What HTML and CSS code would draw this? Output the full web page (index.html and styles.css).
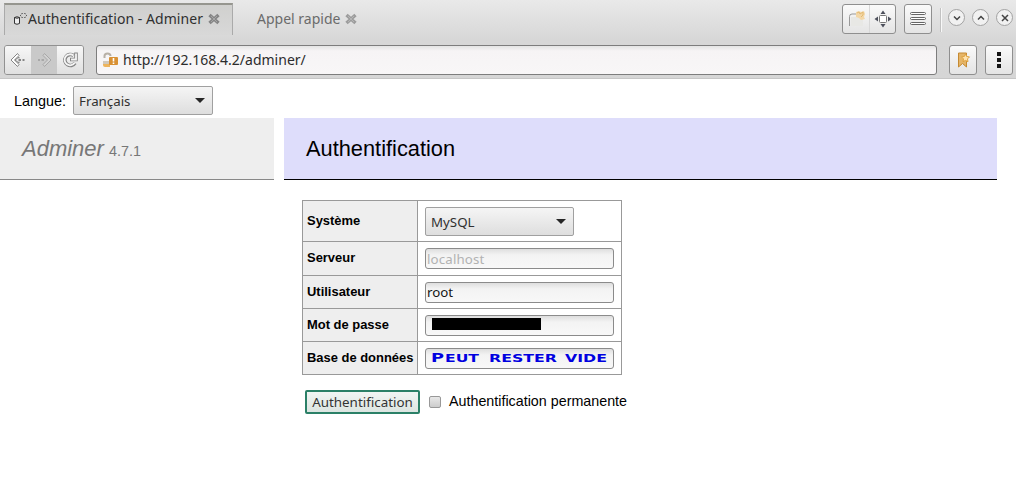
FILE: index.html
```html
<!DOCTYPE html>
<html lang="fr">
<head>
<meta charset="utf-8">
<title>Authentification - Adminer</title>
<link rel="stylesheet" href="styles.css">
</head>
<body>
<div class="chrome">
  <div class="tabbar">
    <div class="tab active">
      <svg class="favicon" width="14" height="16" viewBox="0 0 14 16" fill="none" stroke="#333"><path d="M1.500 6.500v6q2.500 1.500 5 0v-6q-2.500-1.500-5 0q2.500 1.500 5 0" fill="#eee"/><path d="M9.500 2l-2 2.500 2 2.500M11.500 2l2 2.500-2 2.500" stroke-dasharray="1.500 1"/></svg>
      <span class="tabtext t1">Authentification - Adminer</span>
      <svg class="close" width="12" height="12" viewBox="0 0 12 12"><path d="M1.500 2l9 8M10.500 2l-9 8" stroke="#858585" stroke-width="3.400"/><path d="M3 3l6 6M9 3l-6 6" stroke="#a5a5a5" stroke-width="1"/></svg>
    </div>
    <div class="tab">
      <span class="tabtext t2">Appel rapide</span>
      <svg class="close" width="12" height="12" viewBox="0 0 12 12"><path d="M1.500 2l9 8M10.500 2l-9 8" stroke="#9d9d9d" stroke-width="3.400"/><path d="M3 3l6 6M9 3l-6 6" stroke="#b5b5b5" stroke-width="1"/></svg>
    </div>
    <div class="tools">
      <div class="btngroup pair">
        <div class="seg"><svg width="20" height="20" viewBox="0 0 20 20" fill="none"><path d="M3.500 17V7.500q0-2.500 2.500-2.500h4" stroke="#999"/><path d="M5 8h12v9H5z" fill="#e8e8e5"/><path d="M10 3l3-1 2 1 3-1 1 3-1 3 1 2-4 1-2-2-3-1z" fill="#f3d7a6"/><path d="M11 4l2-1 1 2 3-2v3l-2 2" stroke="#e2b972"/></svg></div>
        <div class="seg"><svg width="18" height="18" viewBox="0 0 18 18"><rect x="5.500" y="5.500" width="7" height="7" rx="1" fill="#fff" stroke="#777"/><path d="M9 0.500l2.500 3.500h-5zM9 17.500l2.500-3.500h-5zM0.500 9l3.500-2.500v5zM17.500 9l-3.500-2.500v5z" fill="#4d505c"/></svg></div>
      </div>
      <div class="btngroup menu"><svg width="16" height="16" viewBox="0 0 16 16" fill="#fff" stroke="#666"><rect x="0.500" y="1.500" width="15" height="2" rx="1"/><rect x="0.500" y="6.500" width="15" height="2" rx="1"/><rect x="0.500" y="11.500" width="15" height="2" rx="1"/></svg></div>
      <div class="divider"></div>
      <div class="round"><svg width="8" height="8" viewBox="0 0 8 8"><path d="M1 2.500l3 3 3-3"/></svg></div>
      <div class="round"><svg width="8" height="8" viewBox="0 0 8 8"><path d="M1 5.500l3-3 3 3"/></svg></div>
      <div class="round"><svg width="8" height="8" viewBox="0 0 8 8"><path d="M1 1l6 6M7 1L1 7"/></svg></div>
    </div>
  </div>
  <div class="toolbar">
    <div class="nav">
      <div class="navbtn"><svg width="18" height="18" viewBox="0 0 18 18" fill="none" stroke="#858585"><path d="M8.500 2.500L2 9l6.500 6.500 1.500-2L5.500 9 10 4.500z" fill="#fff"/><path d="M6 9l4-3v1.500M6 9l4 3v-1.500"/><path d="M9.500 9h2.500M13.500 9h2" stroke-width="2"/></svg></div>
      <div class="navbtn off"><svg width="18" height="18" viewBox="0 0 18 18" fill="none" stroke="#a8a8a8"><path d="M9.500 2.500L16 9l-6.500 6.500-1.500-2L12.500 9 8 4.500z" fill="#d2d2d2"/><path d="M3 9h2M6.500 9H9" stroke-width="2"/></svg></div>
      <div class="navbtn"><svg width="18" height="18" viewBox="0 0 18 18" fill="none"><path d="M12.500 4.500A5.500 5.500 0 1 0 14 12M15 1.500v7H9" stroke="#858585" stroke-width="3.600"/><path d="M12.500 4.500A5.500 5.500 0 1 0 13.700 11.700M15 2.500v6h-5" stroke="#f5f5f5" stroke-width="1.800"/></svg></div>
    </div>
    <div class="address">
      <svg width="17" height="16" viewBox="0 0 17 16" fill="none"><path d="M2.500 6V4q0-2.500 3-2.500t3 2.500" stroke="#b7b0a6" stroke-width="2"/><path d="M1 9h7v6H3q-2 0-2-2z" fill="#edb45d"/><path d="M1 9h6v3H1z" fill="#d0c8bb"/><rect x="7" y="5" width="9" height="8" rx="1" fill="#d99134"/><path d="M11.500 6v3.500M11.500 10.500V12" stroke="#fff" stroke-width="1.600"/></svg>
      <span class="url">http://192.168.4.2/adminer/</span>
    </div>
    <div class="btngroup bookmark"><svg width="16" height="18" viewBox="0 0 16 18" fill="none"><path d="M3.500 2h8v14l-4-3.500-4 3.500z" fill="#e5b568" stroke="#c58a32"/><path d="M10.500 3l1.200 2.500 2.800.4-2 2 .5 2.800-2.500-1.300-2.500 1.300.5-2.800-2-2 2.800-.4z" fill="#ffe4b1" stroke="#dfa23f"/></svg></div>
    <div class="btngroup dots"><svg width="6" height="18" viewBox="0 0 6 18" fill="#151515"><path d="M1 1h4v4H1zM1 7h4v4H1zM1 13h4v4H1z"/></svg></div>
  </div>
</div>
<div class="language"><span class="langlabel">Langue:</span><div class="select lang"><span>Français</span><i class="arrow"></i></div></div>
<div class="headings">
  <div class="brand"><span class="name">Adminer</span><span class="version">4.7.1</span></div>
  <h2 class="title">Authentification</h2>
</div>
<div class="content">
  <div class="login">
    <div class="label">Système</div><div class="cell"><div class="select system"><span>MySQL</span><i class="arrow"></i></div></div>
    <div class="label">Serveur</div><div class="cell"><div class="field hint">localhost</div></div>
    <div class="label">Utilisateur</div><div class="cell"><div class="field">root</div></div>
    <div class="label">Mot de passe</div><div class="cell"><div class="field"><div class="mask"></div></div></div>
    <div class="label">Base de données</div><div class="cell"><div class="field"><svg class="note" width="186" height="18"><text class="cap" x="4" y="13" textLength="13" lengthAdjust="spacingAndGlyphs">P</text><text x="18" y="13" textLength="34" lengthAdjust="spacingAndGlyphs">EUT</text><text x="62" y="13" textLength="68" lengthAdjust="spacingAndGlyphs">RESTER</text><text x="138" y="13" textLength="42" lengthAdjust="spacingAndGlyphs">VIDE</text></svg></div></div>
  </div>
  <div class="actions"><div class="submit"><span>Authentification</span></div><div class="check"></div><span class="permanent">Authentification permanente</span></div>
</div>
</body>
</html>
```
FILE: styles.css
```css
* { box-sizing: border-box; }
body { margin: 0; width: 1016px; height: 480px; overflow: hidden; background: #fff; color: #000; font-family: "Liberation Sans", sans-serif; }
svg { display: block; flex: none; }
span { white-space: nowrap; }
.chrome { height: 79px; background: linear-gradient(#e9e9e9, #d7d7d7 40px, #d6d6d6); border-bottom: 1px solid #c6c6c6; font-family: "Noto Sans", sans-serif; }
.tabbar { height: 38px; display: flex; padding-left: 4px; }
.tab { display: flex; align-items: center; height: 32px; margin-top: 3px; padding-left: 24px; color: #6b6b6b; }
.tab.active { width: 229px; padding: 0 0 2px 8px; color: #303030; background: linear-gradient(#d0d0ce, #d8d8d8); border: 1px solid #aaa; border-top: 2px solid #96968f; border-bottom: 0; }
.favicon { margin-right: 1px; }
.tabtext { font-size: 14px; line-height: 20px; }
.t1 { letter-spacing: 0.05px; }
.close { margin-left: 5px; }
.tools { display: flex; margin-left: auto; padding: 4px 3px 0 0; }
.btngroup { display: flex; justify-content: center; align-items: center; height: 30px; border: 1px solid #8f8f8f; border-radius: 3px; background: linear-gradient(#fafafa, #e4e4e4); }
.pair { width: 54px; }
.seg { width: 26px; height: 28px; display: flex; align-items: center; justify-content: center; }
.seg + .seg { border-left: 1px solid #d8d8d8; }
.menu { width: 28px; margin-left: 8px; }
.divider { width: 1px; height: 24px; margin: 4px 7px 0 8px; background: #c2c2c2; box-shadow: 1px 0 #f8f8f8; }
.round { width: 17px; height: 17px; margin: 5px 7px 0 0; border: 1px solid #a2a2a2; border-radius: 50%; background: #f1f1f1; display: flex; align-items: center; justify-content: center; }
.round:last-child { margin-right: 0; }
.round svg { fill: none; stroke: #444; stroke-width: 1.5; }
.toolbar { display: flex; padding: 7px 3px 0 4px; }
.nav { display: flex; width: 80px; height: 30px; border: 1px solid #919191; border-radius: 3px; overflow: hidden; }
.navbtn { flex: 1; display: flex; align-items: center; justify-content: center; background: linear-gradient(#f7f7f7, #e0e0e0); }
.navbtn.off { background: #c9c9c9; }
.address { display: flex; align-items: center; width: 841px; height: 30px; margin-left: 12px; padding-left: 5px; border: 1px solid #7d7d7d; border-radius: 3px; background: linear-gradient(#e4e4e4, #f6f4f5 5px, #f8f6f7); color: #2c2c2c; }
.url { margin-left: 4px; font-size: 14px; line-height: 20px; }
.bookmark { width: 28px; margin-left: 12px; }
.dots { width: 28px; margin-left: 8px; }
.language { display: flex; height: 39px; padding: 7px 0 0 14px; }
.langlabel { width: 59px; font-size: 14.4px; line-height: 31px; }
.select { display: flex; justify-content: space-between; align-items: center; height: 29px; padding: 0 7px 0 5px; border: 1px solid #a0a0a0; border-radius: 2px; background: linear-gradient(#f5f5f5, #dedede); color: #303030; font: 13.3px/20px "Noto Sans", sans-serif; }
.lang { width: 140px; }
.system { width: 149px; margin-top: 1px; }
.arrow { border: 5px solid transparent; border-top: 5px solid #262626; border-bottom: 0; }
.headings { display: flex; gap: 10px; height: 62px; }
.brand { width: 274px; padding: 18px 0 0 22px; background: #eee; border-bottom: 1px solid #888; color: #777; line-height: 25px; }
.name { font-size: 22px; font-style: italic; }
.version { font-size: 14.4px; margin-left: 5px; }
.title { width: 713px; margin: 0; padding: 18px 0 0 22px; background: #deddfb; border-bottom: 1px solid #000; font-size: 21.8px; font-weight: 400; line-height: 25px; }
.content { padding: 20px 0 0 302px; }
.login { display: grid; grid-template-columns: 115px 204px; grid-template-rows: 41px 34px 33px 33px 33px; width: 320px; border-top: 1px solid #999; border-left: 1px solid #999; }
.label, .cell { display: flex; align-items: center; border-right: 1px solid #999; border-bottom: 1px solid #999; }
.label { padding: 0 0 2px 4px; background: #eee; font-size: 12.95px; font-weight: 700; white-space: nowrap; }
.cell { padding-left: 7px; }
.field { display: flex; align-items: center; width: 189px; height: 21px; padding-left: 1px; border: 1px solid #8b8b8b; border-radius: 3px; background: linear-gradient(#dedede, #f3f3f3 6px, #f8f8f8); color: #151515; font: 13.3px/18px "Noto Sans", sans-serif; }
.hint { color: #b2b2b2; letter-spacing: 0.15px; }
.mask { width: 109px; height: 12px; margin: 0 0 2px 5px; background: #000; }
.note { font: 700 10px "DejaVu Sans", sans-serif; fill: #0000e0; }
.cap { font-size: 12.5px; }
.actions { display: flex; align-items: center; height: 24px; margin: 15px 0 0 3px; }
.submit { display: flex; align-items: center; justify-content: center; width: 115px; height: 24px; border: 2px solid #2b8067; border-radius: 2px; background: linear-gradient(#f1f5f3, #dce5e1); color: #333; font: 13.4px/18px "Noto Sans", sans-serif; }
.check { width: 12px; height: 12px; margin-left: 9px; border: 1px solid #989898; border-radius: 2px; background: linear-gradient(#e8e8e8, #ccc); }
.permanent { margin-left: 8px; font-size: 14.3px; line-height: 20px; position: relative; top: -1px; }
```
